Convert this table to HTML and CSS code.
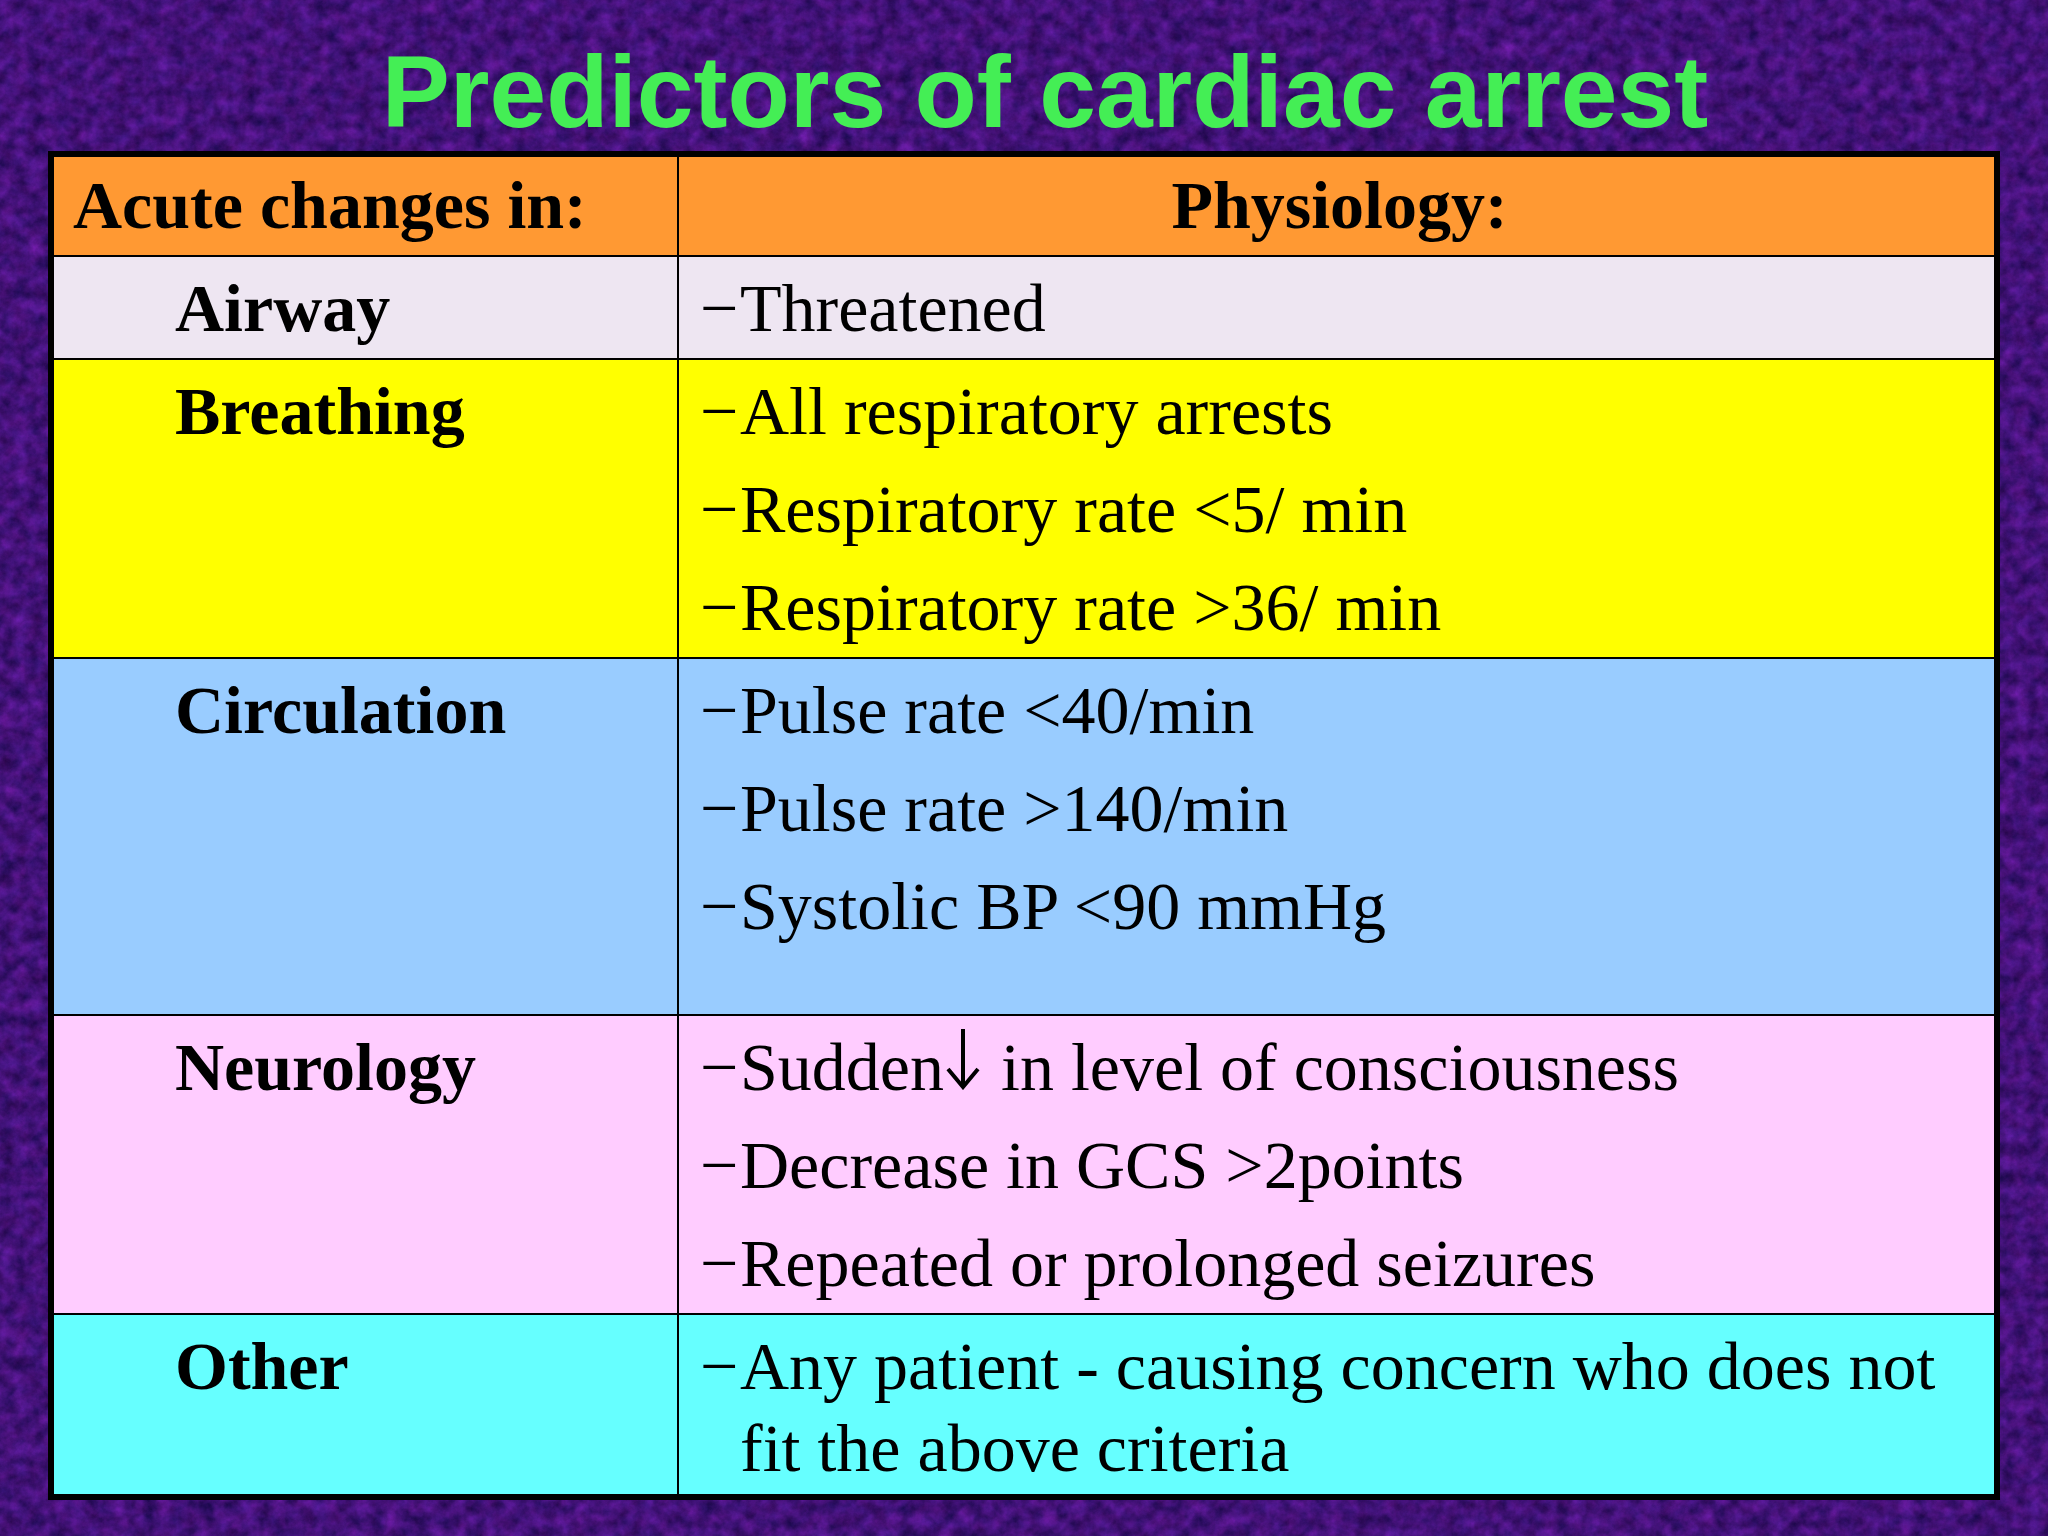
FILE: index.html
```html
<!DOCTYPE html>
<html lang="en">
<head>
<meta charset="utf-8">
<title>Predictors of cardiac arrest</title>
<link rel="stylesheet" href="styles.css">
</head>
<body>
<div class="slide">
  <h1 class="title">Predictors of cardiac arrest</h1>
  <div class="table">
    <div class="row head">
      <div class="cell lab">Acute changes in:</div>
      <div class="cell phys">Physiology:</div>
    </div>
    <div class="row airway">
      <div class="cell lab ind">Airway</div>
      <div class="cell items">
        <div class="item"><span class="dash">−</span><span class="txt">Threatened</span></div>
      </div>
    </div>
    <div class="row breathing">
      <div class="cell lab ind">Breathing</div>
      <div class="cell items">
        <div class="item"><span class="dash">−</span><span class="txt">All respiratory arrests</span></div>
        <div class="item"><span class="dash">−</span><span class="txt">Respiratory rate &lt;5/ min</span></div>
        <div class="item"><span class="dash">−</span><span class="txt">Respiratory rate &gt;36/ min</span></div>
      </div>
    </div>
    <div class="row circulation">
      <div class="cell lab ind">Circulation</div>
      <div class="cell items">
        <div class="item"><span class="dash">−</span><span class="txt">Pulse rate &lt;40/min</span></div>
        <div class="item"><span class="dash">−</span><span class="txt">Pulse rate &gt;140/min</span></div>
        <div class="item"><span class="dash">−</span><span class="txt">Systolic BP &lt;90 mmHg</span></div>
      </div>
    </div>
    <div class="row neurology">
      <div class="cell lab ind">Neurology</div>
      <div class="cell items">
        <div class="item"><span class="dash">−</span><span class="txt">Sudden<svg class="arrow" viewBox="0 0 38 62" width="38" height="62" aria-label="↓" role="img"><path d="M19 1 V58 M4 41 L19 59 L34 41" fill="none" stroke="#000" stroke-width="4" stroke-linecap="butt" stroke-linejoin="miter"/></svg> in level of consciousness</span></div>
        <div class="item"><span class="dash">−</span><span class="txt">Decrease in GCS &gt;2points</span></div>
        <div class="item"><span class="dash">−</span><span class="txt">Repeated or prolonged seizures</span></div>
      </div>
    </div>
    <div class="row other">
      <div class="cell lab ind">Other</div>
      <div class="cell items">
        <div class="item"><span class="dash">−</span><span class="txt">Any patient - causing concern who does not fit the above criteria</span></div>
      </div>
    </div>
  </div>
</div>
</body>
</html>
```
FILE: styles.css
```css
html, body {
  margin: 0;
  padding: 0;
}

body {
  width: 2048px;
  height: 1536px;
  overflow: hidden;
  background-color: #44187f;
  background-image: url("data:image/svg+xml,%3Csvg xmlns='http://www.w3.org/2000/svg' width='2048' height='1536'%3E%3Cfilter id='n' x='0' y='0' width='100%25' height='100%25' color-interpolation-filters='sRGB'%3E%3CfeTurbulence type='fractalNoise' baseFrequency='0.07' numOctaves='5' seed='11'/%3E%3CfeColorMatrix values='0.32 0.14 0 0 0.03  0.1 0 0 0 0.02  0.42 0.06 0 0 0.23  0 0 0 0 1'/%3E%3C/filter%3E%3Crect width='100%25' height='100%25' filter='url(%23n)'/%3E%3C/svg%3E");
  background-repeat: no-repeat;
}

.slide {
  display: flex;
  flex-direction: column;
  padding-top: 41px;
}

.title {
  margin: 0;
  padding-left: 42px;
  font-family: "Liberation Sans", Arial, sans-serif;
  font-weight: bold;
  font-size: 102px;
  line-height: 102px;
  color: #44ee55;
  text-align: center;
}

.table {
  margin: 8px 0 0 48px;
  width: 1952px;
  box-sizing: border-box;
  border: 6px solid #000;
  display: flex;
  flex-direction: column;
  font-family: "Liberation Serif", "Times New Roman", serif;
  font-size: 68px;
  line-height: 82px;
  color: #000;
}

.row {
  display: grid;
  grid-template-columns: 625px 1fr;
  border-bottom: 2px solid #000;
}

.row:last-child {
  border-bottom: 0;
}

.cell {
  padding: 10px 10px 9px 0;
}

.lab {
  border-right: 2px solid #000;
  font-weight: bold;
  padding-left: 19px;
}

.ind {
  padding-left: 121px;
}

.head .cell {
  padding-top: 7px;
  padding-bottom: 9px;
}

.head .phys {
  text-align: center;
  font-weight: bold;
  padding-left: 16px;
}

.items {
  padding-left: 21px;
  display: flex;
  flex-direction: column;
  gap: 16px;
}

.item {
  display: flex;
}

.dash {
  flex: none;
  width: 40px;
}

.arrow {
  display: inline-block;
  vertical-align: baseline;
  margin: 0 2px 0 0;
}

.head { background: #ff9933; }
.airway { background: #eee6f2; }
.breathing { background: #ffff00; }
.circulation { background: #99ccff; }
.neurology { background: #ffccff; }
.other { background: #66ffff; }

.circulation .cell {
  padding-bottom: 67px;
}

.other .cell {
  padding-bottom: 5px;
}
```
